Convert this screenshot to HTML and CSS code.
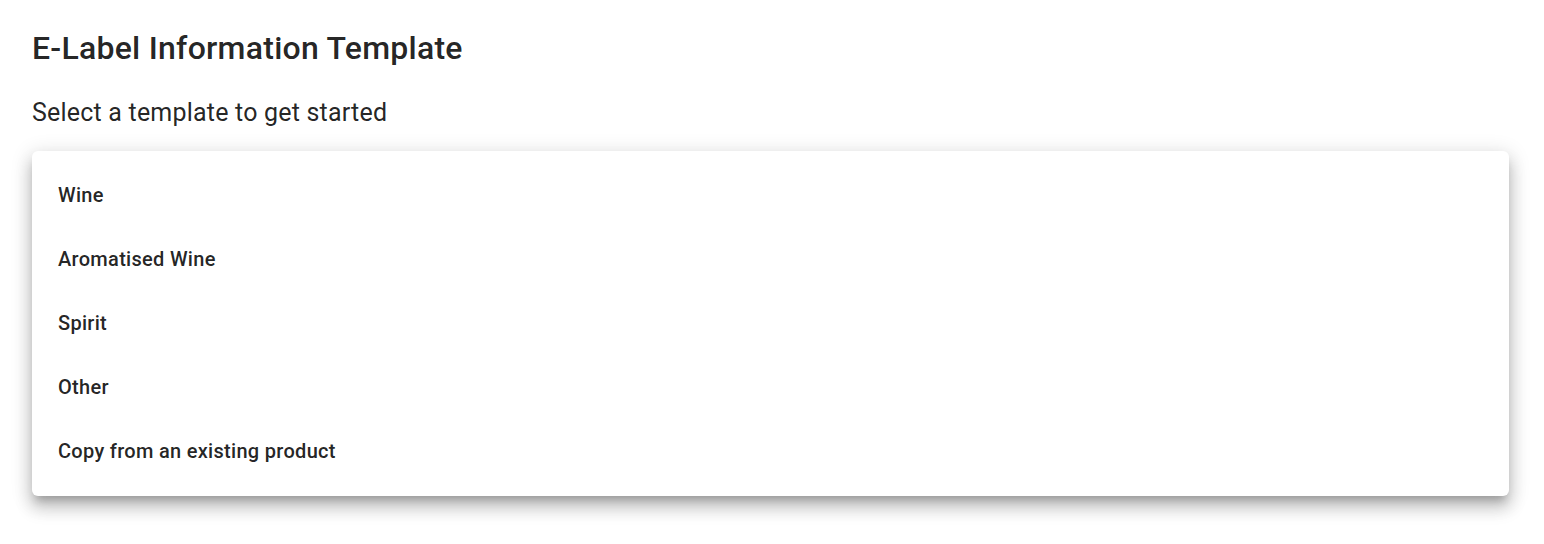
FILE: index.html
```html
<!DOCTYPE html>
<html lang="en">
<head>
  <meta charset="UTF-8" />
  <meta name="viewport" content="width=device-width, initial-scale=1.0"/>
  <title>E-Label Information Template</title>
  <link rel="stylesheet" href="styles.css">
</head>
<body>

  <section class="template-page">
    <h1>E-Label Information Template</h1>
    <p class="subtitle">Select a template to get started</p>

    <ul class="template-menu">
      <li>Wine</li>
      <li>Aromatised Wine</li>
      <li>Spirit</li>
      <li>Other</li>
      <li>Copy from an existing product</li>
    </ul>
  </section>

</body>
</html>
```

FILE: styles.css
```css
* {
  box-sizing: border-box;
}

html,
body {
  min-height: 100%;
}

body {
  margin: 0;
  padding: 0;
  font-family: Roboto, "Liberation Sans", Arial, sans-serif;
  color: rgba(0, 0, 0, 0.87);
  background: #ffffff;
}

.template-page {
  padding: 28px 35px 48px 32px;
}

.template-page h1 {
  margin: 0;
  font-size: 32px;
  font-weight: 500;
  line-height: 40px;
  letter-spacing: 0.25px;
}

.subtitle {
  margin: 29px 0 0;
  font-size: 25px;
  line-height: 32px;
  letter-spacing: 0.2px;
}

.template-menu {
  list-style: none;
  margin: 22px 0 0;
  padding: 12px 0 13px;
  background: #ffffff;
  border-radius: 6px;
  box-shadow: 0 8px 8px -4px rgba(0, 0, 0, 0.22),
              0 12px 16px 2px rgba(0, 0, 0, 0.15),
              0 4px 20px 3px rgba(0, 0, 0, 0.12);
}

.template-menu li {
  height: 64px;
  display: flex;
  align-items: center;
  padding: 0 26px;
  font-size: 20px;
  font-weight: 500;
  letter-spacing: 0.3px;
  cursor: pointer;
}

.template-menu li:hover {
  background: rgba(0, 0, 0, 0.04);
}
```
